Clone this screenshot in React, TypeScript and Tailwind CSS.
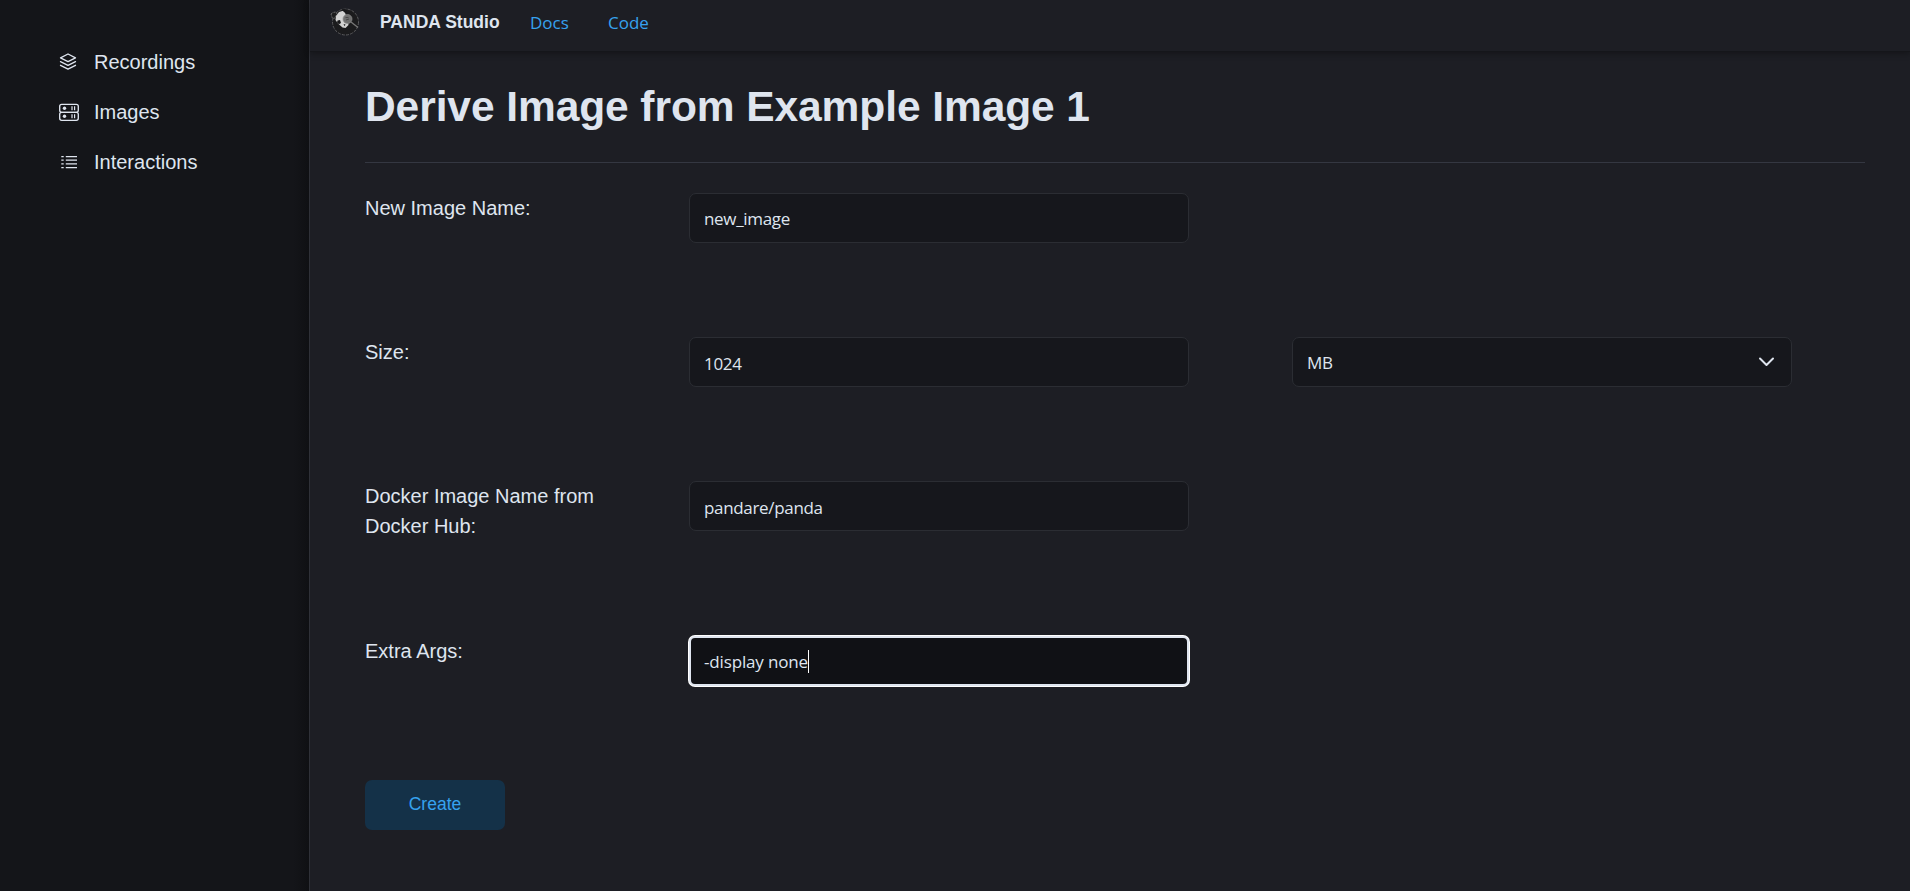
import type { ReactNode } from 'react';

function LayersIcon() {
  return (
    <svg className="mr-[2px]" width="18" height="18" viewBox="0 0 18 18" fill="none" stroke="#dfe5ef" strokeWidth="1.3" strokeLinejoin="round" strokeLinecap="round">
      <path d="M9 1 16.500 4.800 9 8.600 1.500 4.800Z" />
      <path d="M1.500 8.600 9 12.400l7.500-3.800" />
      <path d="M1.500 12.300 9 16.100l7.500-3.800" />
    </svg>
  );
}

function StorageIcon() {
  return (
    <svg width="20" height="18" viewBox="0 0 20 18" fill="none" stroke="#dfe5ef" strokeWidth="1.35">
      <rect x="0.700" y="1.300" width="18.600" height="8" rx="2" />
      <rect x="0.700" y="9.300" width="18.600" height="8" rx="2" />
      <path strokeWidth="1.200" d="M13 3.300v4M15.600 3.300v4M13 11.300v4M15.600 11.300v4" />
      <circle cx="5.500" cy="5.300" r="1.700" fill="#dfe5ef" stroke="none" />
      <circle cx="5.500" cy="13.300" r="1.700" fill="#dfe5ef" stroke="none" />
    </svg>
  );
}

function ListIcon() {
  return (
    <svg width="18" height="18" viewBox="0 0 18 18" fill="none" stroke="#dfe5ef" strokeWidth="1.250">
      <path d="M1.300 3.500h2.400M5.800 3.500H17M1.300 7.200h2.400M5.800 7.200H17M1.300 10.900h2.400M5.800 10.900H17M1.300 14.600h2.400M5.800 14.600H17" />
    </svg>
  );
}

function PandaLogo() {
  return (
    <svg width="30" height="30" viewBox="0 0 30 30">
      <circle cx="15.500" cy="15" r="13" fill="#1b1b1d" stroke="#5b5b5d" strokeWidth="1" strokeDasharray="3 1.200" />
      <path d="M1 7 3 5.500 6 5l1 2-2 4-2.500.5Z" fill="#1c1c1d" stroke="#777" strokeWidth="0.800" strokeDasharray="2 1" />
      <path d="M6 9 9 5 14 3.500l1.500 3.500 2.500 7 .5 4-3 3-3-.5-4.500-4-2.500-3.500Z" fill="#d2d2d2" />
      <path d="m11.500 2.500 3.500-.8 2 2.300-2.500 1.500ZM7.500 13.500l2.500-.4 1 3-2 1.200-2-1.800ZM13.500 17l2 .6-.8 1.600Z" fill="#171719" />
      <circle cx="17.500" cy="12" r="4.500" fill="#707070" stroke="#8c8c8c" strokeWidth="0.700" />
      <path d="M15.500 10.500h3M16 13l3-1" stroke="#4a4a4a" fill="none" />
      <path d="m21 15 7 5.500" stroke="#777" strokeWidth="1.300" />
    </svg>
  );
}

function NavItem({ icon, children }: { icon: ReactNode; children: ReactNode }) {
  return (
    <a className="flex h-[50px] items-center">
      <span className="flex w-[20px] justify-center">{icon}</span>
      <span className="ml-[15px] text-[20px] leading-[30px]">{children}</span>
    </a>
  );
}

function Row({ label, tall, children }: { label: string; tall?: boolean; children: ReactNode }) {
  return (
    <div className={tall ? 'flex h-[155px] items-start' : 'flex h-[144px] items-start'}>
      <label className="w-[250px] shrink-0 text-[20px] leading-[30px]">{label}</label>
      <div className="ml-[74px] flex gap-[103px]">{children}</div>
    </div>
  );
}

const field =
  "flex h-[50px] w-[500px] items-center rounded-[7px] border border-[#2b2d33] bg-[#16171c] px-[14px] pt-[2px] font-['Open_Sans',sans-serif] text-[17px] tracking-[-0.33px]";

export default function App() {
  return (
    <div className="flex h-[891px] w-full overflow-hidden bg-[#1d1e24] font-['Liberation_Sans',Arial,sans-serif] text-[#dfe5ef]">
      <aside className="flex w-[309px] shrink-0 flex-col bg-[linear-gradient(to_right,#141519_0,#141519_294px,#0f1013_309px)] pt-[37px] pl-[59px]">
        <NavItem icon={<LayersIcon />}>Recordings</NavItem>
        <NavItem icon={<StorageIcon />}>Images</NavItem>
        <NavItem icon={<ListIcon />}>Interactions</NavItem>
      </aside>
      <div className="flex min-w-0 flex-1 flex-col border-l border-[#2f3138]">
        <header className="flex h-[52px] shrink-0 items-start border-b border-[#15161a] pl-[20px] shadow-[0_2px_6px_rgba(0,0,0,0.3)]">
          <span className="mt-[7px]"><PandaLogo /></span>
          <span className="mt-[7px] ml-[20px] w-[120px] text-[17.500px] leading-[30px] font-bold whitespace-nowrap">PANDA Studio</span>
          <nav className="mt-[8px] ml-[30px] flex gap-[39px] font-['Open_Sans',sans-serif] text-[17px] leading-[30px] font-medium text-[#36a2ef]">
            <a className="w-[39px]">Docs</a>
            <a>Code</a>
          </nav>
        </header>
        <main className="flex flex-col pr-[45px] pl-[55px]">
          <h1 className="mt-[27px] h-[84px] border-b border-[#343741] text-[42.500px] leading-[55px] font-bold tracking-[-0.080px] whitespace-nowrap">
            Derive Image from Example Image 1
          </h1>
          <form className="mt-[30px] flex flex-col items-start">
            <Row label="New Image Name:">
              <div className={field}>new_image</div>
            </Row>
            <Row label="Size:">
              <div className={field}><span className="mt-px">1024</span></div>
              <div className={field}>
                <span>MB</span>
                <svg className="mr-[2px] mb-[2px] ml-auto" width="17" height="12" viewBox="0 0 17 12" fill="none" stroke="#dfe5ef" strokeWidth="2" strokeLinecap="round" strokeLinejoin="round">
                  <path d="m2 2.500 6.500 6.500 6.500-6.500" />
                </svg>
              </div>
            </Row>
            <Row label="Docker Image Name from Docker Hub:" tall>
              <div className={field}><span className="mt-px">pandare/panda</span></div>
            </Row>
            <Row label="Extra Args:">
              <div className="flex h-[50px] w-[500px] items-center rounded-[6px] border-2 border-[#dfe5ef] bg-[#101115] px-[13px] pt-[2px] font-['Open_Sans',sans-serif] text-[17px] tracking-[-0.150px] ring-1 ring-white">
                <span>-display none</span>
                <span className="-mt-[2px] h-[23px] w-px bg-white" />
              </div>
            </Row>
            <button type="button" className="h-[50px] w-[140px] rounded-[7px] bg-[#143148] pb-[2px] text-[17.500px] text-[#36a2ef]">
              Create
            </button>
          </form>
        </main>
      </div>
    </div>
  );
}
